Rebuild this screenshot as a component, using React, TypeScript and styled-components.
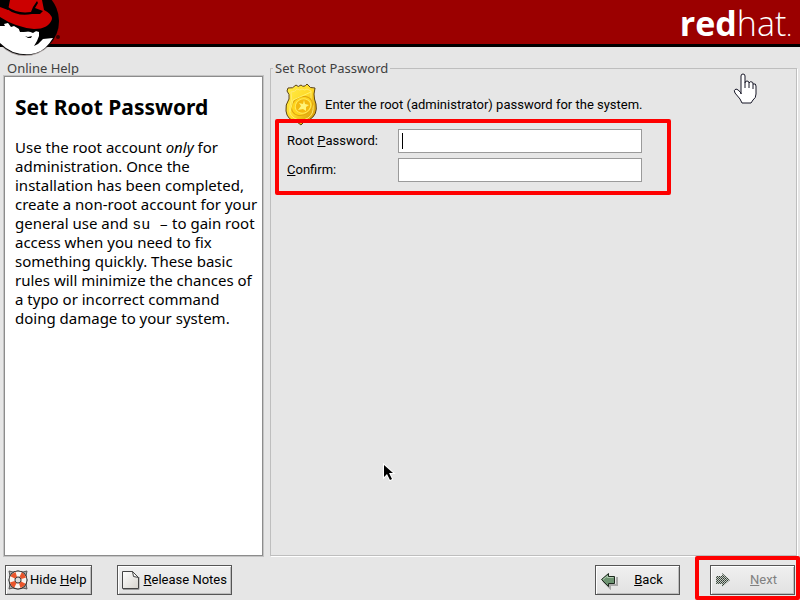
import React from "react";
import styled, { createGlobalStyle } from "styled-components";

const GlobalStyle = createGlobalStyle`
  *, *::before, *::after { box-sizing: border-box; }
  body {
    margin: 0;
    background: #e6e6e6;
    color: #000;
    font-family: Roboto, "Noto Sans", sans-serif;
    font-size: 13px;
    line-height: 16px;
  }
`;

const Page = styled.div`
  display: flex;
  flex-direction: column;
  min-height: 100vh;
  overflow: hidden;
`;

const Header = styled.header`
  position: relative;
  display: flex;
  justify-content: flex-end;
  height: 47px;
  padding-right: 8px;
  background: #9b0000;
  border-bottom: 3px solid #000;
`;

const Shadowman = styled.svg`
  position: absolute;
  left: 0;
  top: 0;
`;

const Wordmark = styled.div`
  color: #fff;
  font-family: "Open Sans", sans-serif;
  font-size: 34px;
  font-weight: 300;
  line-height: 46px;

  strong { font-weight: 700; }
  small { font-size: 24px; }
`;

const Main = styled.main`
  flex: 1;
  display: grid;
  grid-template-columns: 262px minmax(0, 1fr);
  gap: 6px;
  padding: 14px 2px 0;
`;

const HelpSection = styled.section`
  display: flex;
  flex-direction: column;
`;

const PanelTitle = styled.h2`
  margin: 0;
  padding-left: 5px;
  color: #404040;
  font-family: "Noto Sans", sans-serif;
  font-size: 13px;
  font-weight: 400;
  line-height: 14px;
`;

const HelpBox = styled.article`
  flex: 1;
  padding: 18px 0 0 10px;
  background: #fff;
  border: 1px solid #8c8c8c;
  outline: 1px solid #c4c4c4;
  margin: 1px 1px 1px 2px;
  font-family: "Noto Sans", sans-serif;
  font-size: 15px;
  line-height: 19px;
  white-space: nowrap;
`;

const HelpHeading = styled.h1`
  margin: 0 0 19px;
  font-size: 21px;
  line-height: 24px;
`;

const HelpText = styled.p`
  margin: 0;
`;

const Command = styled.code`
  font-family: "Liberation Mono", monospace;
  font-size: 15px;
  line-height: 15px;
  white-space: pre;
`;

const FormFrame = styled.fieldset`
  min-width: 0;
  margin: 0 1px 1px 0;
  padding: 8px 14px 0 16px;
  border: 1px solid #bebebe;
  box-shadow: 1px 1px 0 #fff;

  legend {
    margin-left: -14px;
    padding: 0 2px;
    color: #404040;
    font-family: "Noto Sans", sans-serif;
    line-height: 14px;
  }
`;

const Intro = styled.div`
  display: flex;
  align-items: center;
  gap: 7px;
  height: 43px;
  margin-left: -3px;

  p { margin: 0; }
`;

const Fields = styled.form`
  position: relative;
  display: grid;
  grid-template-columns: 104px 244px;
  gap: 5px 7px;
  align-items: center;
  width: fit-content;
  padding: 3px 0 4px;
`;

const TextField = styled.input`
  width: 100%;
  height: 24px;
  padding: 2px 4px;
  background: #fff;
  border: 1px solid #9a9a9a;
  border-radius: 0;
  outline: none;
  font: inherit;
`;

const FieldWrap = styled.div`
  position: relative;
  display: flex;
`;

const Caret = styled.i`
  position: absolute;
  left: 4px;
  top: 4px;
  width: 1px;
  height: 16px;
  background: #000;
`;

const Highlight = styled.div<{ $inset: string }>`
  position: absolute;
  inset: ${(p) => p.$inset};
  border: 4px solid #fe0000;
  border-radius: 2px;
  pointer-events: none;
`;

const Footer = styled.footer`
  display: flex;
  align-items: center;
  padding: 8px 5px 5px;
`;

const FooterButton = styled.button<{ $gap?: number; $wide?: boolean }>`
  display: flex;
  align-items: center;
  gap: 2px;
  width: ${(p) => (p.$wide ? "85px" : "auto")};
  height: 30px;
  margin-left: ${(p) => p.$gap ?? 0}px;
  padding: 0 4px 0 2px;
  background: linear-gradient(#f0f0f0, #e2e2e2);
  border: 1px solid #555;
  border-radius: 0;
  box-shadow: inset 1px 1px 0 #fff, inset -1px -1px 0 #bdbdbd;
  color: #000;
  font: inherit;
  white-space: nowrap;

  span { flex: 1; text-align: center; }
  &:disabled { color: #808080; }
`;

const Spacer = styled.div`
  flex: 1;
`;

const NextWrap = styled.div`
  position: relative;
  margin-left: 30px;
`;

const Pointer = styled.svg<{ $x: number; $y: number }>`
  position: absolute;
  left: ${(p) => p.$x}px;
  top: ${(p) => p.$y}px;
  pointer-events: none;
`;

const ShadowmanLogo = () => (
  <Shadowman width="64" height="60" viewBox="0 0 64 60" aria-label="Red Hat logo">
    <circle cx="25" cy="22" r="34" fill="#2b1515" opacity=".35" />
    <circle cx="25" cy="21" r="34" fill="#000" />
    <path d="M0 26L5 26L4 24L8 23L11 27L14 26L19 29L20 32L39 31L39 36L37 41L34 46L38 44L43 39L53 38Q46 50 36 53Q25 56 13 52Q6 49 0 43Z" fill="#fff" />
    <path d="M25 36L28 37L32 36L31 38L28 38Z" fill="#000" />
    <path d="M18 26H41L39 32L36 31L33 33L28 31L23 32L20 31Z" fill="#000" />
    <path d="M0 7L8 10L10 0H42L44 10Q52 14 52 19Q49 29 34 29Q15 27 0 17Z" fill="#cc0000" />
    <path d="M9 2L8 7Q17 14 31 12L33 7L37 1L38 3L35 8L43 11L40 14L32 14Q18 17 7 9Z" fill="#000" />
    <circle cx="58" cy="37" r="2" fill="#350000" />
  </Shadowman>
);

const Badge = () => (
  <svg width="34" height="44" viewBox="0 0 34 44" aria-hidden="true">
    <defs>
      <linearGradient id="gold" x1="0" y1="0" x2="1" y2="1">
        <stop offset="0" stopColor="#fff04a" />
        <stop offset=".5" stopColor="#ffd927" />
        <stop offset="1" stopColor="#c98a00" />
      </linearGradient>
    </defs>
    <path d="M4 5Q9 6 12 2Q14 5 17 2Q20 5 23 1Q26 6 31 5L30 11Q30 16 32 21Q34 32 25 37L20 39L17 42L13 39Q3 37 2 28Q1 22 5 16Q6 11 3 8Z" fill="url(#gold)" stroke="#5c4210" />
    <path d="M7 9Q11 9 13 6Q16 8 18 6Q21 8 23 6L27 8Q26 16 29 23Q30 31 24 35L17 38L10 35Q4 31 6 23Q9 16 7 9Z" fill="none" stroke="#ffe970" />
    <ellipse cx="18" cy="23" rx="11" ry="9" transform="rotate(-30 18 23)" fill="#ffd51c" stroke="#dfa512" />
    <ellipse cx="19" cy="23" rx="8" ry="7" transform="rotate(-30 19 23)" fill="#f3b90f" stroke="#ffe85a" />
    <path d="M20 17L21 21L25 22L22 24L22 28L19 26L14 27L17 23L15 20L19 21Z" fill="#fff47a" />
    <path d="M6 29L9 17L27 9" fill="none" stroke="#fff36b" />
  </svg>
);

const LifeRing = () => (
  <svg width="20" height="22" viewBox="0 0 20 22" aria-hidden="true">
    <path d="M1 2L5 3Q10 1 15 3L19 2L18 7Q20 11 18 15L19 20L15 19Q10 21 5 19L1 20L2 15Q0 11 2 7Z" fill="#aaa" stroke="#555" />
    <circle cx="10" cy="11" r="6" fill="#ddd" stroke="#333" strokeWidth="7" />
    <circle cx="10" cy="11" r="6" fill="none" stroke="#f8f4ef" strokeWidth="5" />
    <circle cx="10" cy="11" r="6" fill="none" stroke="#e9552b" strokeWidth="5" pathLength="40" strokeDasharray="5 5" strokeDashoffset="-3" />
  </svg>
);

const PageIcon = () => (
  <svg width="22" height="22" viewBox="0 0 22 22" aria-hidden="true">
    <defs>
      <linearGradient id="paper" x1="0" y1="0" x2="1" y2="1">
        <stop offset="0" stopColor="#fff" />
        <stop offset="1" stopColor="#d6d3cd" />
      </linearGradient>
    </defs>
    <path d="M3 20.500H19V8" fill="none" stroke="#999" />
    <path d="M2.500 2.500H12.500L18.500 8.500V19.500H2.500Z" fill="url(#paper)" stroke="#444" />
    <path d="M12.500 2.500L13.500 7.500L18.500 8.500Z" fill="#f7f7f5" stroke="#444" />
  </svg>
);

const BackArrow = () => (
  <svg width="22" height="20" viewBox="0 0 22 20" aria-hidden="true">
    <path d="M5 11L12 18V15H19V7" fill="none" stroke="#aaa" strokeWidth="2" />
    <path d="M3.500 9.500L10.500 3.500V6.500H16.500V13.500H10.500V16.500Z" fill="#6e9472" stroke="#1d291e" />
    <path d="M5 9.500L9.500 6V7.500H15.500" fill="none" stroke="#b1ccb2" />
  </svg>
);

const NextArrow = () => (
  <svg width="22" height="20" viewBox="0 0 22 20" aria-hidden="true">
    <defs>
      <pattern id="stipple" width="2" height="2" patternUnits="userSpaceOnUse">
        <rect width="2" height="2" fill="#c5cac5" />
        <rect width="1" height="1" fill="#303830" />
        <rect x="1" y="1" width="1" height="1" fill="#485a49" />
      </pattern>
    </defs>
    <path d="M3 6H9V3L17 10L9 17V14H3Z" fill="url(#stipple)" />
  </svg>
);

export default function App() {
  return (
    <Page>
      <GlobalStyle />
      <Header>
        <ShadowmanLogo />
        <Wordmark><strong>red</strong>hat<small>.</small></Wordmark>
      </Header>
      <Main>
        <HelpSection>
          <PanelTitle>Online Help</PanelTitle>
          <HelpBox>
            <HelpHeading>Set Root Password</HelpHeading>
            <HelpText>
              Use the root account <em>only</em> for<br />
              administration. Once the<br />
              installation has been completed,<br />
              create a non-root account for your<br />
              general use and <Command>su –</Command> to gain root<br />
              access when you need to fix<br />
              something quickly. These basic<br />
              rules will minimize the chances of<br />
              a typo or incorrect command<br />
              doing damage to your system.
            </HelpText>
          </HelpBox>
        </HelpSection>
        <FormFrame>
          <legend>Set Root Password</legend>
          <Intro>
            <Badge />
            <p>Enter the root (administrator) password for the system.</p>
          </Intro>
          <Fields id="root-password-form" onSubmit={(e) => e.preventDefault()}>
            <label htmlFor="password">Root <u>P</u>assword:</label>
            <FieldWrap>
              <TextField id="password" type="password" />
              <Caret />
            </FieldWrap>
            <label htmlFor="confirm"><u>C</u>onfirm:</label>
            <FieldWrap>
              <TextField id="confirm" type="password" />
            </FieldWrap>
            <Highlight $inset="-7px -29px -9px -12px" />
          </Fields>
        </FormFrame>
      </Main>
      <Footer>
        <FooterButton type="button"><LifeRing /><span>Hide <u>H</u>elp</span></FooterButton>
        <FooterButton type="button" $gap={25}><PageIcon /><span><u>R</u>elease Notes</span></FooterButton>
        <Spacer />
        <FooterButton type="button" $wide><BackArrow /><span><u>B</u>ack</span></FooterButton>
        <NextWrap>
          <FooterButton type="submit" form="root-password-form" $wide disabled><NextArrow /><span><u>N</u>ext</span></FooterButton>
          <Highlight $inset="-9px -5px -5px -15px" />
        </NextWrap>
      </Footer>
      <Pointer $x={733} $y={73} width="25" height="32" viewBox="0 0 25 32" aria-hidden="true">
        <path d="M8 21V3Q8 1 10 1Q12 1 12 3V10Q12 8 14 8Q16 8 16 10Q17 8 19 9Q20 9 20 11Q23 10 23 13V21Q23 25 20 27L18 30H9L7 26L2 20Q0 17 3 16Q5 16 8 20Z" fill="#fff" stroke="#171727" strokeWidth="1" />
        <path d="M12 10V15M16 10V15M20 11V16" stroke="#171727" />
      </Pointer>
      <Pointer $x={382} $y={463} width="14" height="20" viewBox="0 0 14 20" aria-hidden="true">
        <path d="M2 2V14L5 11L8 17L10 16L7 10H11Z" fill="#000" stroke="#fff" paintOrder="stroke" strokeWidth="2" />
      </Pointer>
    </Page>
  );
}
